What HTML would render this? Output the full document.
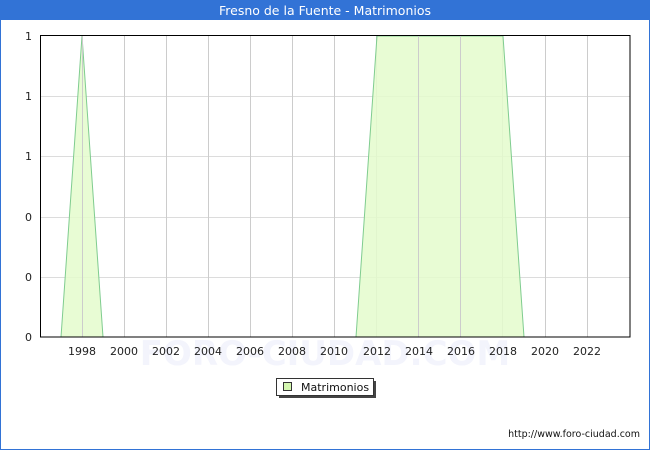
<!DOCTYPE html>
<html><head><style>
body{margin:0;width:650px;height:450px;overflow:hidden;background:#fff;font-family:"DejaVu Sans","Liberation Sans",sans-serif;}
</style></head><body>
<svg width="650" height="450" xmlns="http://www.w3.org/2000/svg" font-family="DejaVu Sans, Liberation Sans, sans-serif">
<rect x="0.5" y="0.5" width="649" height="449" fill="#fff" stroke="#3273d6"/>
<rect x="0" y="0" width="650" height="20" fill="#3273d6"/>
<text x="325" y="15" fill="#fff" font-size="12.5" text-anchor="middle">Fresno de la Fuente - Matrimonios</text>
<text x="325" y="365" fill="#f3f4fc" font-size="34" text-anchor="middle" font-weight="bold">FORO-CIUDAD.COM</text>
<g stroke="#dcdcdc" stroke-width="1">
<line x1="41" y1="96.5" x2="630" y2="96.5"/><line x1="41" y1="156.5" x2="630" y2="156.5"/>
<line x1="41" y1="217.5" x2="630" y2="217.5"/><line x1="41" y1="277.5" x2="630" y2="277.5"/>
</g>
<g stroke="#cccccc" stroke-width="1">
<line x1="82.5" y1="35" x2="82.5" y2="337"/><line x1="124.5" y1="35" x2="124.5" y2="337"/>
<line x1="166.5" y1="35" x2="166.5" y2="337"/><line x1="208.5" y1="35" x2="208.5" y2="337"/>
<line x1="250.5" y1="35" x2="250.5" y2="337"/><line x1="292.5" y1="35" x2="292.5" y2="337"/>
<line x1="334.5" y1="35" x2="334.5" y2="337"/><line x1="376.5" y1="35" x2="376.5" y2="337"/>
<line x1="418.5" y1="35" x2="418.5" y2="337"/><line x1="460.5" y1="35" x2="460.5" y2="337"/>
<line x1="502.5" y1="35" x2="502.5" y2="337"/><line x1="545.5" y1="35" x2="545.5" y2="337"/>
<line x1="587.5" y1="35" x2="587.5" y2="337"/>
</g>
<polygon points="61,337 82,36 103,337" fill="#e4fccc" fill-opacity="0.85" stroke="#7fcc8f"/>
<polygon points="356,337 377,36 503,36 524,337" fill="#e4fccc" fill-opacity="0.85" stroke="#7fcc8f"/>
<g stroke="#cccccc"><line x1="418.5" y1="36" x2="418.5" y2="337"/><line x1="460.5" y1="36" x2="460.5" y2="337"/><line x1="82.5" y1="36" x2="82.5" y2="337"/></g>
<rect x="40.5" y="35.5" width="589.5" height="301.5" fill="none" stroke="#000"/>
<g font-size="11" fill="#222" text-anchor="end">
<text x="32" y="40">1</text><text x="32" y="100">1</text><text x="32" y="160">1</text>
<text x="32" y="221">0</text><text x="32" y="281">0</text><text x="32" y="341">0</text>
</g>
<g font-size="11" fill="#222" text-anchor="middle">
<text x="82" y="355">1998</text><text x="124" y="355">2000</text><text x="166" y="355">2002</text>
<text x="208" y="355">2004</text><text x="250" y="355">2006</text><text x="292" y="355">2008</text>
<text x="334" y="355">2010</text><text x="377" y="355">2012</text><text x="419" y="355">2014</text>
<text x="461" y="355">2016</text><text x="503" y="355">2018</text><text x="545" y="355">2020</text>
<text x="587" y="355">2022</text>
</g>
<rect x="279" y="381" width="97" height="17" fill="#444"/>
<rect x="276.5" y="378.5" width="97" height="17" fill="#fff" stroke="#333"/>
<rect x="283.5" y="382.5" width="8" height="8" fill="#d4f7b0" stroke="#333"/>
<text x="301" y="391" font-size="11" fill="#111">Matrimonios</text>
<text x="640" y="437" font-size="9.5" fill="#111" text-anchor="end">http://www.foro-ciudad.com</text>
</svg>
</body></html>
